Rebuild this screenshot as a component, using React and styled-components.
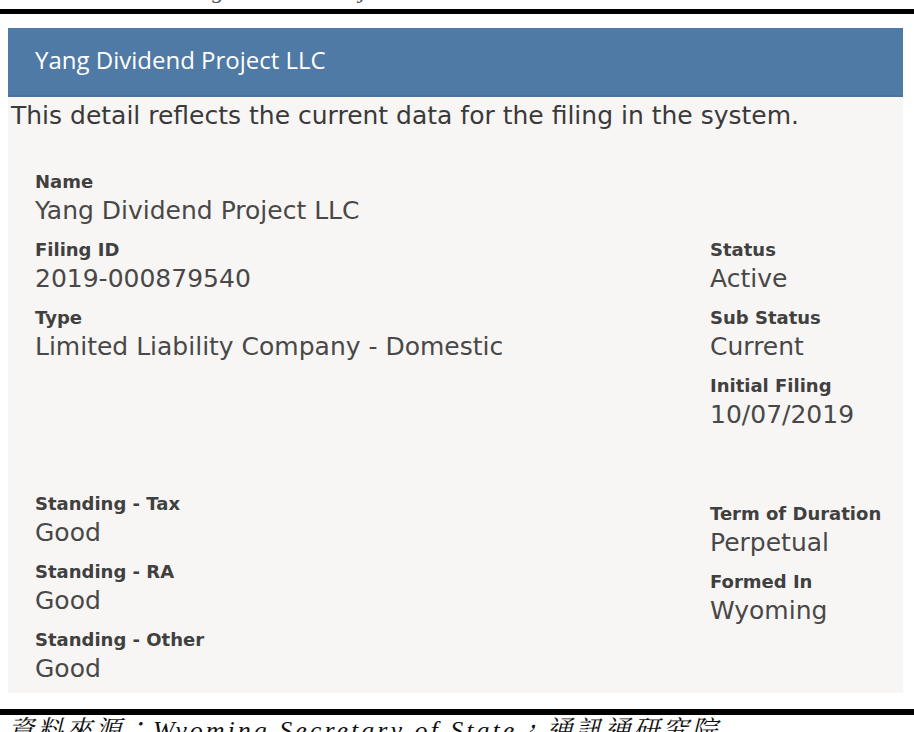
import styled, { createGlobalStyle } from "styled-components";

const GlobalStyle = createGlobalStyle`
  body {
    margin: 0;
    background: #ffffff;
  }
`;

const Page = styled.div`
  width: 914px;
  height: 732px;
  overflow: hidden;
  background: #ffffff;
`;

/* caption of the figure above, only its lowest pixels remain in the crop */
const CutCaption = styled.div`
  height: 9px;
  overflow: hidden;
  display: flex;
  align-items: flex-end;
  justify-content: center;
  font-family: "Liberation Serif", "Noto Sans CJK TC", serif;
  font-style: italic;
  font-size: 24px;
  line-height: 24px;
  color: #555;

  span {
    margin-bottom: 7px;
  }
`;

const Rule = styled.div`
  height: ${(p) => p.$thick}px;
  background: #000;
  margin-top: ${(p) => p.$gap || 0}px;
`;

const Panel = styled.section`
  margin: 14px 11px 0 8px;
  background: #f8f6f4;
`;

const Header = styled.h2`
  margin: 0;
  height: 69px;
  box-sizing: border-box;
  display: flex;
  align-items: center;
  padding: 0 0 5px 27px;
  background: #4f7aa5;
  border-bottom: 2px solid #4a739c;
  color: #ffffff;
  font-family: "Open Sans", "DejaVu Sans", sans-serif;
  font-weight: 400;
  font-size: 24px;
`;

const Intro = styled.p`
  margin: 2px 0 0;
  padding-left: 3px;
  font-family: "DejaVu Sans", Verdana, sans-serif;
  font-size: 25px;
  line-height: 34px;
  color: #3a3a3a;
  white-space: nowrap;
`;

const Details = styled.div`
  padding: 36px 0 8px 27px;
`;

const Columns = styled.div`
  display: grid;
  grid-template-columns: 675px 1fr;
  margin-top: ${(p) => p.$gap}px;
`;

const Column = styled.div`
  display: flex;
  flex-direction: column;
  gap: 10px;
  padding-top: ${(p) => p.$offset || 0}px;
`;

const Field = styled.div`
  display: flex;
  flex-direction: column;
  font-family: "DejaVu Sans", Verdana, sans-serif;
`;

const Label = styled.span`
  font-size: 18px;
  line-height: 25px;
  font-weight: 700;
  color: #404040;
  white-space: nowrap;
`;

const Value = styled.span`
  font-size: 25px;
  line-height: 33px;
  color: #484848;
  white-space: nowrap;
`;

const Caption = styled.div`
  padding-left: 8px;
  font-family: "Liberation Serif", "Noto Serif CJK TC", "Noto Sans CJK TC", serif;
  font-style: italic;
  font-size: 26px;
  line-height: 32px;
  letter-spacing: 3px;
  color: #111;
  white-space: nowrap;
`;

const Item = ({ label, value }) => (
  <Field>
    <Label>{label}</Label>
    <Value>{value}</Value>
  </Field>
);

const App = () => {
  return (
    <Page>
      <GlobalStyle />
      <CutCaption>
        <span>Yang Dividend Project LLC 於懷俄明州的公司登記資料</span>
      </CutCaption>
      <Rule $thick={5} />
      <Panel>
        <Header>Yang Dividend Project LLC</Header>
        <Intro>This detail reflects the current data for the filing in the system.</Intro>
        <Details>
          <Item label="Name" value="Yang Dividend Project LLC" />
          <Columns $gap={10}>
            <Column>
              <Item label="Filing ID" value="2019-000879540" />
              <Item label="Type" value="Limited Liability Company - Domestic" />
            </Column>
            <Column>
              <Item label="Status" value="Active" />
              <Item label="Sub Status" value="Current" />
              <Item label="Initial Filing" value="10/07/2019" />
            </Column>
          </Columns>
          <Columns $gap={60}>
            <Column>
              <Item label="Standing - Tax" value="Good" />
              <Item label="Standing - RA" value="Good" />
              <Item label="Standing - Other" value="Good" />
            </Column>
            <Column $offset={10}>
              <Item label="Term of Duration" value="Perpetual" />
              <Item label="Formed In" value="Wyoming" />
            </Column>
          </Columns>
        </Details>
      </Panel>
      <Rule $thick={6} $gap={16} />
      <Caption>資料來源：Wyoming Secretary of State，通訊通研究院</Caption>
    </Page>
  );
};

export default App;
